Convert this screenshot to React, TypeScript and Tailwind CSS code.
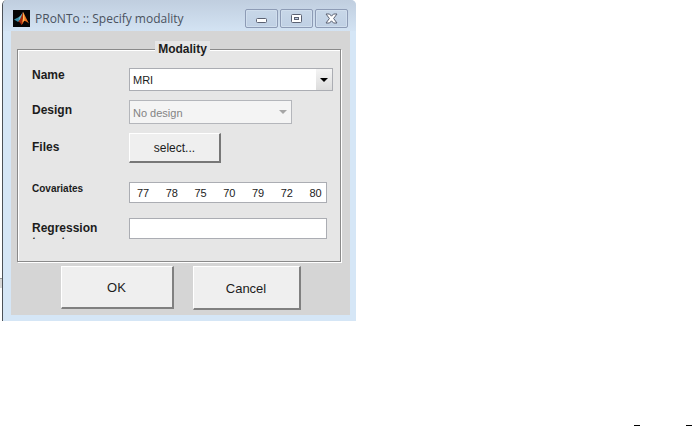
import { useState, type ReactNode } from "react";

type RowProps = {
  id: string;
  label: string;
  labelClassName?: string;
  className?: string;
  children: ReactNode;
};

const COVARIATES = [77, 78, 75, 70, 79, 72, 80];

function MatlabIcon() {
  return (
    <svg viewBox="0 0 17 17" className="h-[17px] w-[17px] shrink-0" aria-hidden="true">
      <rect width="17" height="17" fill="#050505" />
      <path d="M1 9.5 L5.5 7.2 L8 9.2 L5.2 12 Z" fill="#3c8fa8" />
      <path d="M5.5 7.2 C7.5 6.5 8.5 4 10 2 L8.6 8.6 L6.6 10.8 Z" fill="#63b3c6" />
      <path d="M10 2 C8.8 5 8 8.6 5.2 12 C7 11.4 7.4 13.6 8.6 15 C10 13.6 10.2 11.6 11.2 11 Z" fill="#a3290b" />
      <path d="M10 2 C11.8 4.4 13.6 9.6 16 13.4 C14 12 12.8 10.6 11.2 11 C10.2 11.6 10 13.6 8.6 15 C10.2 10.6 10.2 6 10 2 Z" fill="#ee7422" />
      <path d="M10 2 C11 4 11.6 7 11.4 10 L9.4 12.6 C10.2 9 10.2 5.6 10 2 Z" fill="#fbc05a" />
    </svg>
  );
}

function CaptionButton({ label, children }: { label: string; children: ReactNode }) {
  return (
    <button
      type="button"
      aria-label={label}
      className="flex h-[19px] w-[33px] items-center justify-center rounded-[2px] border border-[#8d9bb5] bg-linear-to-b from-[#c8d7e8] to-[#bfd0e4] shadow-[inset_0_0_0_1px_#d0deed]"
    >
      {children}
    </button>
  );
}

function Row({ id, label, labelClassName = "text-[12px]", className = "", children }: RowProps) {
  return (
    <div className={`flex items-start ${className}`}>
      <label htmlFor={id} className={`w-[97px] shrink-0 leading-[14px] font-bold ${labelClassName}`}>
        {label}
      </label>
      <div className="min-w-0 flex-1">{children}</div>
    </div>
  );
}

function Arrow({ className }: { className: string }) {
  return (
    <svg viewBox="0 0 8 4" className={`h-1 w-2 ${className}`} aria-hidden="true">
      <path d="M0 0 H8 L4 4 Z" fill="currentColor" />
    </svg>
  );
}

export default function App() {
  const [name, setName] = useState("MRI");
  const [covariates, setCovariates] = useState(COVARIATES.join("\u2002\u2002\u2002"));
  const [targets, setTargets] = useState("");

  return (
    <div className="relative flex min-h-screen items-start bg-white font-['Liberation_Sans',Arial,sans-serif] text-[#1c1c1c]">
      <div className="mt-[278px] h-[10px] w-[2px] shrink-0 border-t border-[#999] bg-[#d8d8d8]" />

      <main className="w-[52%] max-w-[354px] min-w-[340px] rounded-t-[5px] border-l border-[#4c5157] bg-[#d5e6f6] pb-[6px]">
        <header className="flex h-[31px] items-center rounded-t-[5px] bg-linear-to-b from-[#c0cedf] to-[#d3e3f3] pt-[6px] pr-2 pl-[10px]">
          <MatlabIcon />
          <h1 className="ml-[5px] flex-1 truncate font-['Open_Sans',sans-serif] text-[12px] text-[#4a5260]">
            PRoNTo :: Specify modality
          </h1>
          <div className="flex gap-[2px]">
            <CaptionButton label="Minimize">
              <svg viewBox="0 0 13 6" className="mt-1 h-[6px] w-[13px]">
                <rect x="1.5" y="0.5" width="10" height="4" rx="1" fill="#fff" stroke="#5b6172" />
              </svg>
            </CaptionButton>
            <CaptionButton label="Maximize">
              <svg viewBox="0 0 11 9" className="h-[9px] w-[11px]">
                <rect x="0.5" y="0.5" width="10" height="8" rx="1" fill="#fff" stroke="#5b6172" />
                <rect x="3.5" y="3.5" width="4" height="2" fill="#bccbe0" stroke="#5b6172" />
              </svg>
            </CaptionButton>
            <CaptionButton label="Close">
              <svg viewBox="0 0 13 11" className="h-[11px] w-[13px]">
                <path
                  d="M1 1 H4.5 L6.5 3.2 L8.5 1 H12 L8.6 5.5 L12 10 H8.5 L6.5 7.8 L4.5 10 H1 L4.4 5.5 Z"
                  fill="#fff"
                  stroke="#5b6172"
                />
              </svg>
            </CaptionButton>
          </div>
        </header>

        <form
          className="mr-[6px] ml-2 bg-[#d5d5d5] px-[6px] pt-[10px] pb-[5px]"
          onSubmit={(event) => event.preventDefault()}
        >
          <fieldset className="mr-[3px] border border-[#8a8a8a] bg-[#e6e6e6] pr-[7px] pb-[22px] pl-[14px] shadow-[1px_1px_0_#fff,inset_1px_1px_0_#fff]">
            <legend className="mx-auto bg-[#e6e6e6] px-[3px] text-[12px] leading-4 font-bold">Modality</legend>

            <Row id="name" label="Name" className="mt-[11px]">
              <div className="relative">
                <select
                  id="name"
                  value={name}
                  onChange={(event) => setName(event.target.value)}
                  className="block h-[23px] w-full appearance-none border border-[#abadb3] bg-white pt-[2px] pl-[3px] text-[11px]"
                >
                  <option>MRI</option>
                  <option>PET</option>
                </select>
                <span className="pointer-events-none absolute inset-y-px right-px flex w-4 items-center justify-center bg-linear-to-b from-[#f4f4f4] to-[#dcdcdc]">
                  <Arrow className="text-black" />
                </span>
              </div>
            </Row>

            <Row id="design" label="Design" labelClassName="pt-[3px] text-[12px]" className="mt-[9px]">
              <div className="relative w-4/5">
                <select
                  id="design"
                  disabled
                  className="block h-6 w-full appearance-none border border-[#b4b6bb] bg-[#f4f4f4] pt-[2px] pl-[3px] text-[11px] text-[#838383] opacity-100"
                >
                  <option>No design</option>
                </select>
                <span className="pointer-events-none absolute inset-y-px right-px flex w-4 items-center justify-center">
                  <Arrow className="text-[#a6a6a6]" />
                </span>
              </div>
            </Row>

            <Row id="files" label="Files" labelClassName="pt-[7px] text-[12px]" className="mt-[9px]">
              <button
                id="files"
                type="button"
                className="block h-[30px] w-[45%] border-t border-r-2 border-b-2 border-l border-t-white border-r-[#777] border-b-[#777] border-l-white bg-[#efefef] text-[12px]"
              >
                select...
              </button>
            </Row>

            <Row id="covariates" label="Covariates" labelClassName="text-[10px]" className="mt-[19px]">
              <input
                id="covariates"
                type="text"
                value={covariates}
                onChange={(event) => setCovariates(event.target.value)}
                className="block h-[21px] w-[97%] border border-[#abadb3] bg-white pl-[7px] text-[11px]"
              />
            </Row>

            <Row
              id="targets"
              label="Regression targets"
              labelClassName="h-[21px] overflow-hidden pt-[3px] pr-5 text-[12px]"
              className="mt-[15px]"
            >
              <input
                id="targets"
                type="text"
                value={targets}
                onChange={(event) => setTargets(event.target.value)}
                className="block h-[21px] w-[97%] border border-[#abadb3] bg-white px-2 text-[11px]"
              />
            </Row>
          </fieldset>

          <div className="mt-1 flex justify-center gap-[19px]">
            <button
              type="submit"
              className="h-[43px] w-[113px] border-t border-r-2 border-b-2 border-l border-t-white border-r-[#808080] border-b-[#808080] border-l-white bg-[#efefef] pt-[2px] text-[13px]"
            >
              OK
            </button>
            <button
              type="button"
              className="h-11 w-[108px] border-t border-r-2 border-b-2 border-l border-t-white border-r-[#808080] border-b-[#808080] border-l-white bg-[#efefef] pt-[2px] text-[13px]"
            >
              Cancel
            </button>
          </div>
        </form>
      </main>

      <div className="absolute right-0 bottom-0 flex gap-[46px]">
        <span className="h-px w-[6px] bg-black" />
        <span className="h-px w-[6px] bg-black" />
      </div>
    </div>
  );
}
